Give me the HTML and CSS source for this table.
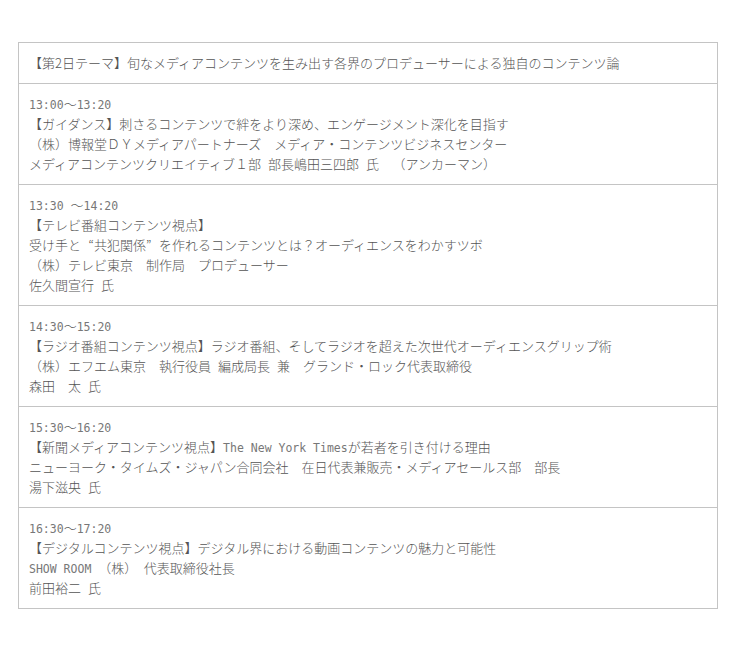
FILE: index.html
```html
<!DOCTYPE html>
<html lang="ja">
<head>
<meta charset="utf-8">
<title>第2日テーマ</title>
<link rel="stylesheet" href="styles.css">
</head>
<body>
<div class="page">
  <div class="schedule">
    <div class="row">【第2日テーマ】旬なメディアコンテンツを生み出す各界のプロデューサーによる独自のコンテンツ論</div>
    <div class="row">
      <span class="en">13:00</span>〜<span class="en">13:20</span><br>
      【ガイダンス】刺さるコンテンツで絆をより深め、エンゲージメント深化を目指す<br>
      （株）博報堂ＤＹメディアパートナーズ　メディア・コンテンツビジネスセンター<br>
      メディアコンテンツクリエイティブ１部<span class="en"> </span>部長嶋田三四郎<span class="en"> </span>氏<span class="en"> </span>　（アンカーマン）
    </div>
    <div class="row">
      <span class="en">13:30 </span>〜<span class="en">14:20</span><br>
      【テレビ番組コンテンツ視点】<br>
      受け手と<span class="q qo">“</span>共犯関係<span class="q qc">”</span>を作れるコンテンツとは？オーディエンスをわかすツボ<br>
      （株）テレビ東京　制作局　プロデューサー<br>
      佐久間宣行<span class="en"> </span>氏
    </div>
    <div class="row">
      <span class="en">14:30</span>〜<span class="en">15:20</span><br>
      【ラジオ番組コンテンツ視点】ラジオ番組、そしてラジオを超えた次世代オーディエンスグリップ術<br>
      （株）エフエム東京　執行役員<span class="en"> </span>編成局長<span class="en"> </span>兼　グランド・ロック代表取締役<br>
      森田　太<span class="en"> </span>氏
    </div>
    <div class="row">
      <span class="en">15:30</span>〜<span class="en">16:20</span><br>
      【新聞メディアコンテンツ視点】<span class="en">The New York Times</span>が若者を引き付ける理由<br>
      ニューヨーク・タイムズ・ジャパン合同会社　在日代表兼販売・メディアセールス部　部長<br>
      湯下滋央<span class="en"> </span>氏
    </div>
    <div class="row">
      <span class="en">16:30</span>〜<span class="en">17:20</span><br>
      【デジタルコンテンツ視点】デジタル界における動画コンテンツの魅力と可能性<br>
      <span class="en">SHOW ROOM </span>（株）　代表取締役社長<br>
      前田裕二<span class="en"> </span>氏
    </div>
  </div>
</div>
</body>
</html>
```
FILE: styles.css
```css
html, body {
  margin: 0;
  padding: 0;
  background: #ffffff;
}

.page {
  padding: 42px 0 0 18px;
}

.schedule {
  width: 700px;
  box-sizing: border-box;
  border: 1px solid #c4c4c4;
  font-family: "Noto Sans CJK JP", "Noto Sans", sans-serif;
  font-weight: 300;
  font-size: 13px;
  line-height: 20px;
  color: #555555;
}

.row {
  padding: 10px 10px;
  border-top: 1px solid #c4c4c4;
  white-space: nowrap;
}

.row:first-child {
  border-top: none;
}

.en {
  font-family: "DejaVu Sans Mono", "Liberation Mono", monospace;
  font-weight: 400;
  font-size: 11.5px;
  line-height: 1;
  color: #777777;
  white-space: pre;
}

.q {
  display: inline-block;
  width: 13px;
  line-height: 1;
}

.qo {
  text-align: right;
}

.qc {
  text-align: left;
}
```
